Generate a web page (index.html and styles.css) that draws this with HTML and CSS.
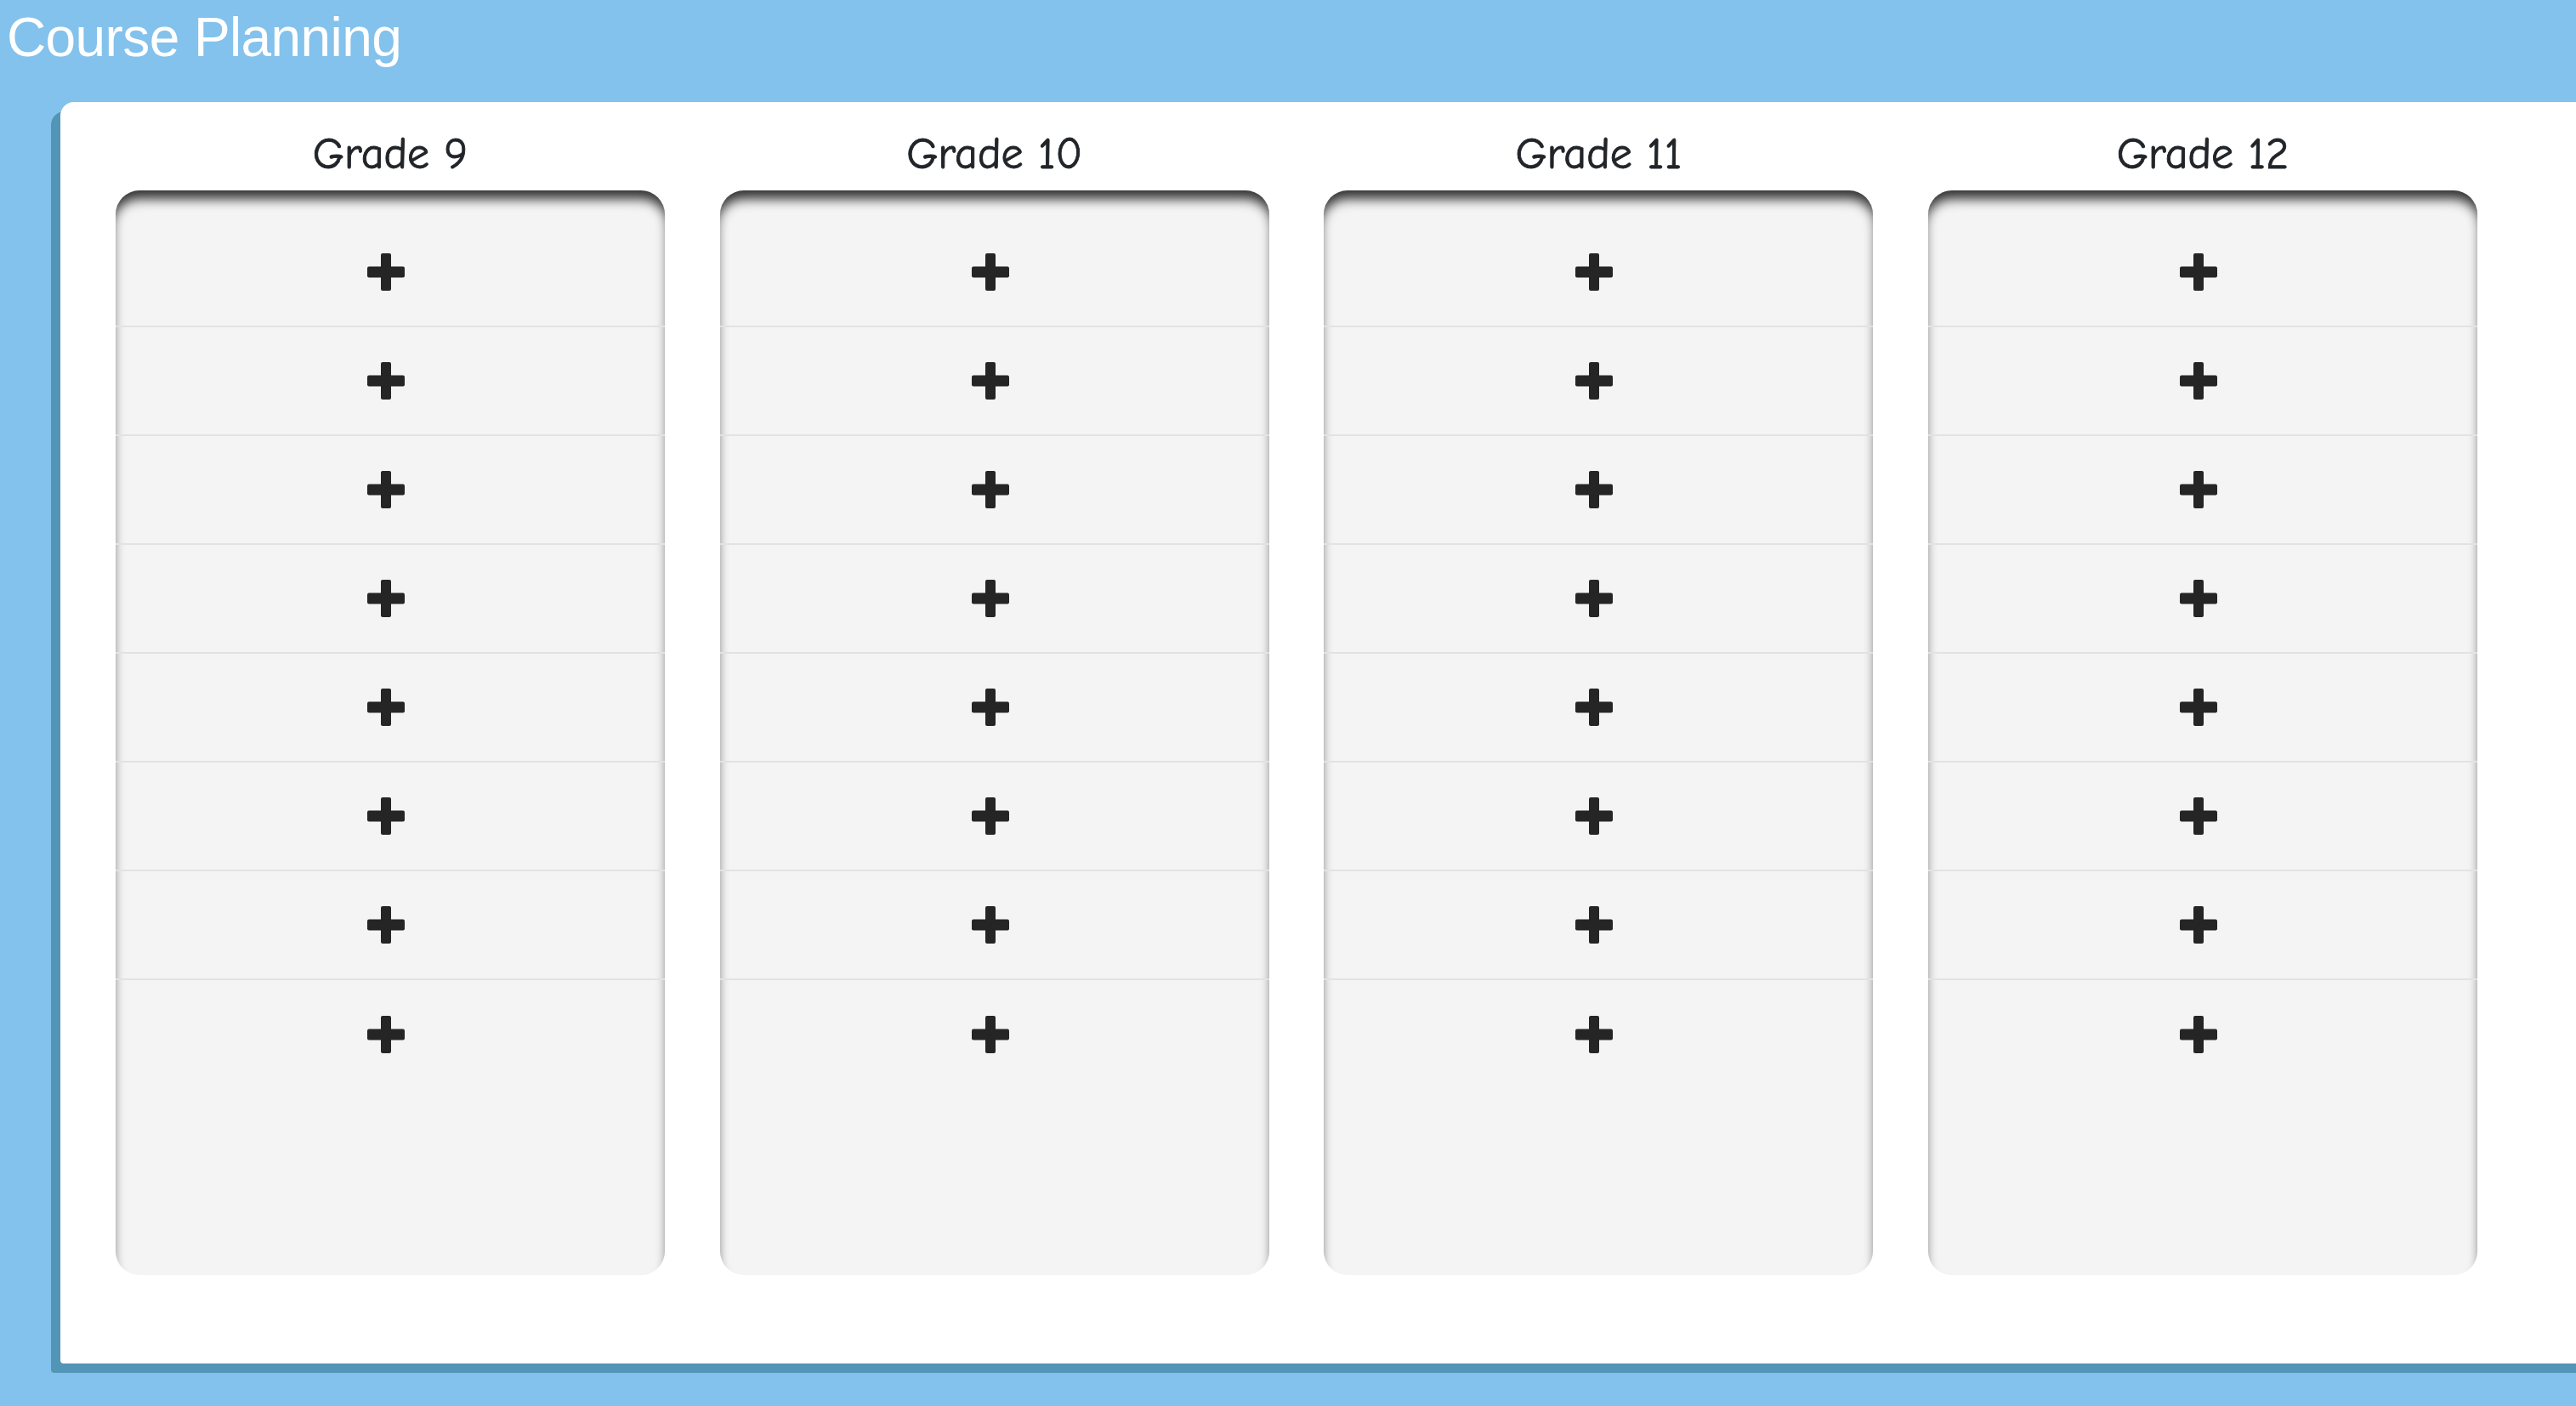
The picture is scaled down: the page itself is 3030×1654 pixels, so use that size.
FILE: index.html
```html
<!DOCTYPE html>
<html lang="en">
<head>
<meta charset="utf-8">
<title>Course Planning</title>
<link rel="stylesheet" href="styles.css">
</head>
<body>
<header class="topbar">
  <h1 class="app-title">Course Planning</h1>
</header>
<main class="panel">
  <div class="grades">
    <section class="grade">
      <h2 class="grade-title">Grade 9</h2>
      <div class="slots">
        <div class="slot"><svg class="plus" viewBox="0 0 44 44"><rect x="16" y="0" width="12" height="44" rx="2"/><rect x="0" y="15.5" width="44" height="13" rx="2"/></svg></div>
        <div class="slot"><svg class="plus" viewBox="0 0 44 44"><rect x="16" y="0" width="12" height="44" rx="2"/><rect x="0" y="15.5" width="44" height="13" rx="2"/></svg></div>
        <div class="slot"><svg class="plus" viewBox="0 0 44 44"><rect x="16" y="0" width="12" height="44" rx="2"/><rect x="0" y="15.5" width="44" height="13" rx="2"/></svg></div>
        <div class="slot"><svg class="plus" viewBox="0 0 44 44"><rect x="16" y="0" width="12" height="44" rx="2"/><rect x="0" y="15.5" width="44" height="13" rx="2"/></svg></div>
        <div class="slot"><svg class="plus" viewBox="0 0 44 44"><rect x="16" y="0" width="12" height="44" rx="2"/><rect x="0" y="15.5" width="44" height="13" rx="2"/></svg></div>
        <div class="slot"><svg class="plus" viewBox="0 0 44 44"><rect x="16" y="0" width="12" height="44" rx="2"/><rect x="0" y="15.5" width="44" height="13" rx="2"/></svg></div>
        <div class="slot"><svg class="plus" viewBox="0 0 44 44"><rect x="16" y="0" width="12" height="44" rx="2"/><rect x="0" y="15.5" width="44" height="13" rx="2"/></svg></div>
        <div class="slot"><svg class="plus" viewBox="0 0 44 44"><rect x="16" y="0" width="12" height="44" rx="2"/><rect x="0" y="15.5" width="44" height="13" rx="2"/></svg></div>
      </div>
    </section>
    <section class="grade">
      <h2 class="grade-title">Grade 10</h2>
      <div class="slots">
        <div class="slot"><svg class="plus" viewBox="0 0 44 44"><rect x="16" y="0" width="12" height="44" rx="2"/><rect x="0" y="15.5" width="44" height="13" rx="2"/></svg></div>
        <div class="slot"><svg class="plus" viewBox="0 0 44 44"><rect x="16" y="0" width="12" height="44" rx="2"/><rect x="0" y="15.5" width="44" height="13" rx="2"/></svg></div>
        <div class="slot"><svg class="plus" viewBox="0 0 44 44"><rect x="16" y="0" width="12" height="44" rx="2"/><rect x="0" y="15.5" width="44" height="13" rx="2"/></svg></div>
        <div class="slot"><svg class="plus" viewBox="0 0 44 44"><rect x="16" y="0" width="12" height="44" rx="2"/><rect x="0" y="15.5" width="44" height="13" rx="2"/></svg></div>
        <div class="slot"><svg class="plus" viewBox="0 0 44 44"><rect x="16" y="0" width="12" height="44" rx="2"/><rect x="0" y="15.5" width="44" height="13" rx="2"/></svg></div>
        <div class="slot"><svg class="plus" viewBox="0 0 44 44"><rect x="16" y="0" width="12" height="44" rx="2"/><rect x="0" y="15.5" width="44" height="13" rx="2"/></svg></div>
        <div class="slot"><svg class="plus" viewBox="0 0 44 44"><rect x="16" y="0" width="12" height="44" rx="2"/><rect x="0" y="15.5" width="44" height="13" rx="2"/></svg></div>
        <div class="slot"><svg class="plus" viewBox="0 0 44 44"><rect x="16" y="0" width="12" height="44" rx="2"/><rect x="0" y="15.5" width="44" height="13" rx="2"/></svg></div>
      </div>
    </section>
    <section class="grade">
      <h2 class="grade-title">Grade 11</h2>
      <div class="slots">
        <div class="slot"><svg class="plus" viewBox="0 0 44 44"><rect x="16" y="0" width="12" height="44" rx="2"/><rect x="0" y="15.5" width="44" height="13" rx="2"/></svg></div>
        <div class="slot"><svg class="plus" viewBox="0 0 44 44"><rect x="16" y="0" width="12" height="44" rx="2"/><rect x="0" y="15.5" width="44" height="13" rx="2"/></svg></div>
        <div class="slot"><svg class="plus" viewBox="0 0 44 44"><rect x="16" y="0" width="12" height="44" rx="2"/><rect x="0" y="15.5" width="44" height="13" rx="2"/></svg></div>
        <div class="slot"><svg class="plus" viewBox="0 0 44 44"><rect x="16" y="0" width="12" height="44" rx="2"/><rect x="0" y="15.5" width="44" height="13" rx="2"/></svg></div>
        <div class="slot"><svg class="plus" viewBox="0 0 44 44"><rect x="16" y="0" width="12" height="44" rx="2"/><rect x="0" y="15.5" width="44" height="13" rx="2"/></svg></div>
        <div class="slot"><svg class="plus" viewBox="0 0 44 44"><rect x="16" y="0" width="12" height="44" rx="2"/><rect x="0" y="15.5" width="44" height="13" rx="2"/></svg></div>
        <div class="slot"><svg class="plus" viewBox="0 0 44 44"><rect x="16" y="0" width="12" height="44" rx="2"/><rect x="0" y="15.5" width="44" height="13" rx="2"/></svg></div>
        <div class="slot"><svg class="plus" viewBox="0 0 44 44"><rect x="16" y="0" width="12" height="44" rx="2"/><rect x="0" y="15.5" width="44" height="13" rx="2"/></svg></div>
      </div>
    </section>
    <section class="grade">
      <h2 class="grade-title">Grade 12</h2>
      <div class="slots">
        <div class="slot"><svg class="plus" viewBox="0 0 44 44"><rect x="16" y="0" width="12" height="44" rx="2"/><rect x="0" y="15.5" width="44" height="13" rx="2"/></svg></div>
        <div class="slot"><svg class="plus" viewBox="0 0 44 44"><rect x="16" y="0" width="12" height="44" rx="2"/><rect x="0" y="15.5" width="44" height="13" rx="2"/></svg></div>
        <div class="slot"><svg class="plus" viewBox="0 0 44 44"><rect x="16" y="0" width="12" height="44" rx="2"/><rect x="0" y="15.5" width="44" height="13" rx="2"/></svg></div>
        <div class="slot"><svg class="plus" viewBox="0 0 44 44"><rect x="16" y="0" width="12" height="44" rx="2"/><rect x="0" y="15.5" width="44" height="13" rx="2"/></svg></div>
        <div class="slot"><svg class="plus" viewBox="0 0 44 44"><rect x="16" y="0" width="12" height="44" rx="2"/><rect x="0" y="15.5" width="44" height="13" rx="2"/></svg></div>
        <div class="slot"><svg class="plus" viewBox="0 0 44 44"><rect x="16" y="0" width="12" height="44" rx="2"/><rect x="0" y="15.5" width="44" height="13" rx="2"/></svg></div>
        <div class="slot"><svg class="plus" viewBox="0 0 44 44"><rect x="16" y="0" width="12" height="44" rx="2"/><rect x="0" y="15.5" width="44" height="13" rx="2"/></svg></div>
        <div class="slot"><svg class="plus" viewBox="0 0 44 44"><rect x="16" y="0" width="12" height="44" rx="2"/><rect x="0" y="15.5" width="44" height="13" rx="2"/></svg></div>
      </div>
    </section>
  </div>
</main>
</body>
</html>
```

FILE: styles.css
```css
html, body {
  margin: 0;
  padding: 0;
  overflow: hidden;
}

body {
  background: #83c2ec;
  width: 3030px;
  height: 1654px;
}

.topbar {
  padding: 6px 8px 0;
  height: 114px;
  box-sizing: border-box;
}

.app-title {
  margin: 0;
  font-family: "Liberation Sans", Arial, sans-serif;
  font-weight: 400;
  font-size: 64px;
  line-height: 76.8px;
  letter-spacing: -0.6px;
  color: #ffffff;
}

.panel {
  margin-top: 6px;
  margin-left: 71px;
  width: 3100px;
  box-sizing: border-box;
  padding: 29px 0 104px 65px;
  background: #ffffff;
  border-radius: 16px 0 0 4px;
  box-shadow: -11px 11px 0 #5295b6;
}

.grades {
  display: grid;
  grid-template-columns: repeat(4, 646px);
  column-gap: 64.7px;
}

.grade {
  display: flex;
  flex-direction: column;
}

.grade-title {
  margin: 0 0 11px;
  text-align: center;
  font-family: "Comic Sans MS", "Comic Neue", "Open Sans", sans-serif;
  font-weight: 400;
  font-size: 52px;
  line-height: 64px;
  color: #212529;
  -webkit-text-stroke: 0.9px #212529;
}

.slots {
  height: 1276px;
  box-sizing: border-box;
  padding-top: 33px;
  background: #f4f4f4;
  border-radius: 28px;
  box-shadow: inset 0 14px 14px -4px rgba(0, 0, 0, 0.8);
}

.slot {
  height: 128px;
  box-sizing: border-box;
  display: flex;
  align-items: center;
  justify-content: center;
  padding-right: 10px;
  border-bottom: 2px solid #e2e2e2;
}

.slot:last-child {
  border-bottom: none;
}

.plus {
  width: 44px;
  height: 44px;
  fill: #252525;
}
```
